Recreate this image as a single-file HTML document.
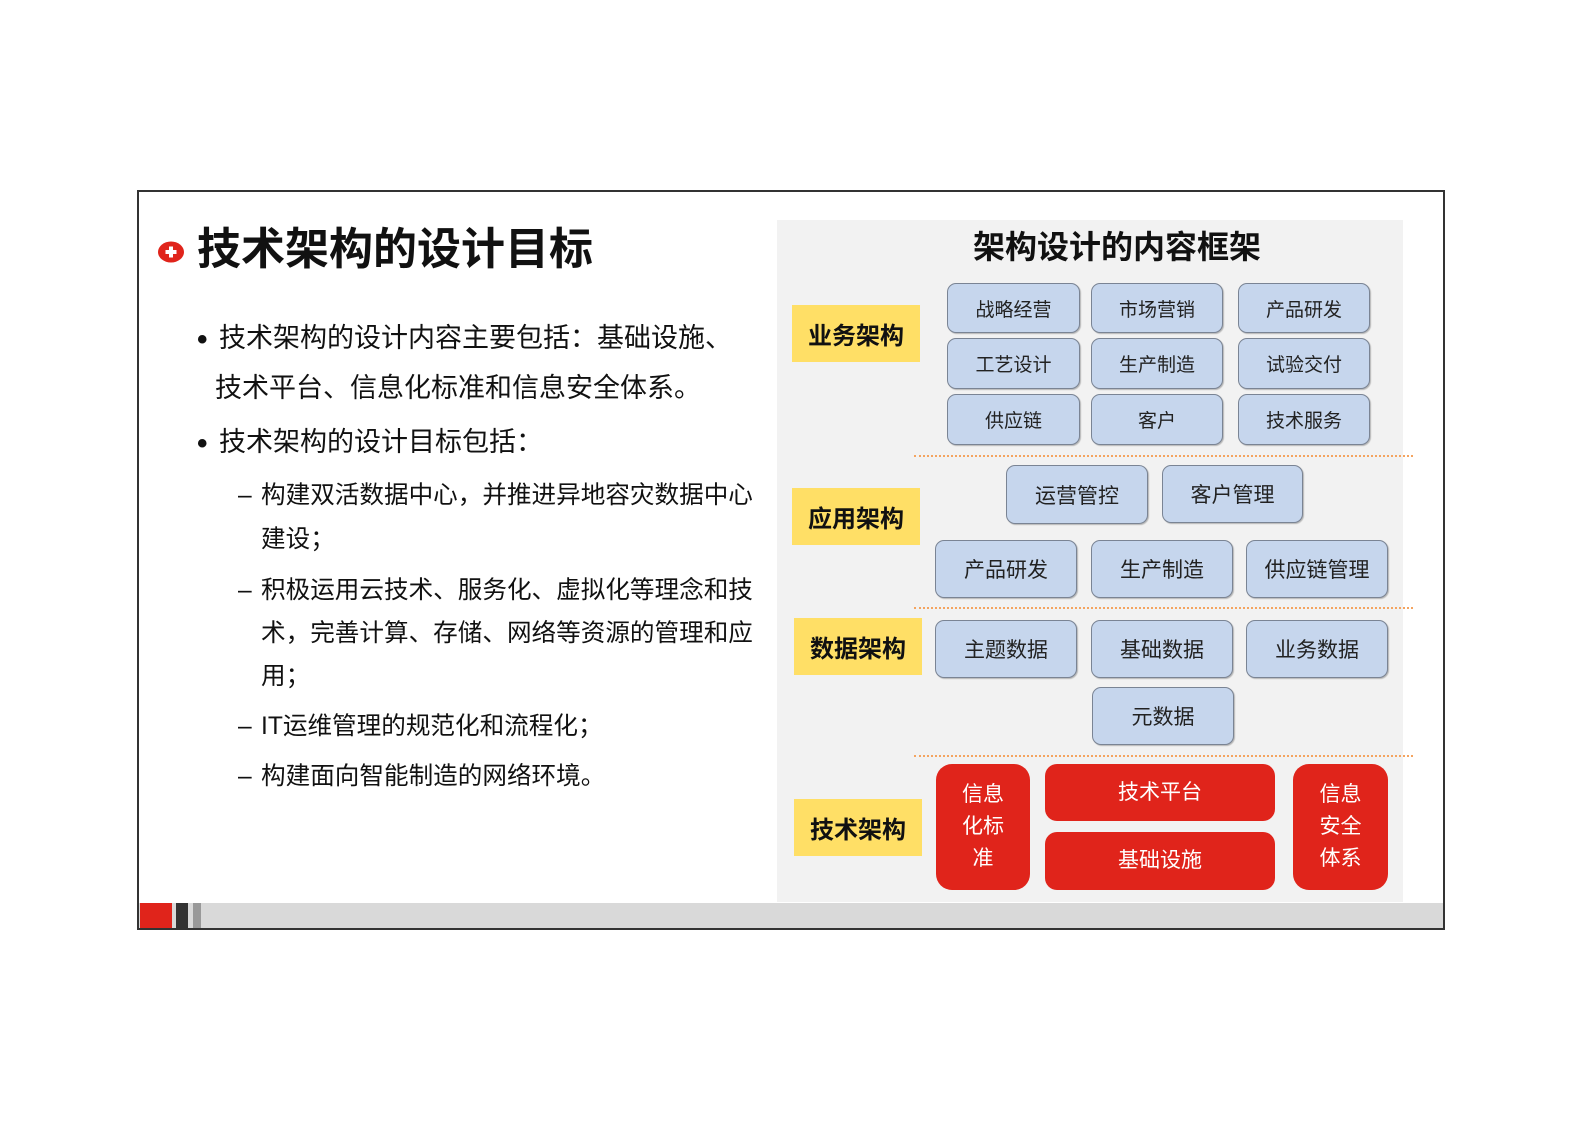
<!DOCTYPE html>
<html><head><meta charset="utf-8"><style>
*{margin:0;padding:0;box-sizing:border-box}
body{width:1587px;height:1122px;background:#fff;position:relative;overflow:hidden;font-family:"Liberation Sans","Noto Sans CJK SC",sans-serif;color:#111}
.a{position:absolute}
.frame{left:137px;top:190px;width:1308px;height:740px;border:2px solid #333;}
.t{position:absolute;white-space:nowrap;line-height:1}
.m{font-size:27px}
.s{font-size:24.6px}
.dot{font-size:30px;font-weight:bold}
.b{position:absolute;background:#c6d6ed;border:1.5px solid #7a8494;border-radius:9px;display:flex;align-items:center;justify-content:center;font-size:19px;color:#222;box-shadow:1px 1px 1px rgba(0,0,0,.25)}
.b2{font-size:21px}
.y{position:absolute;background:#ffdf66;display:flex;align-items:center;justify-content:center;font-size:24px;font-weight:bold;color:#111}
.r{position:absolute;background:#e0241b;border-radius:16px;display:flex;align-items:center;justify-content:center;color:#fff;font-size:21px;text-align:center;line-height:32px}
.d{position:absolute;left:914px;width:499px;height:0;border-top:2px dotted #f4a460}
</style></head><body>
<div class="a frame"></div>
<div class="a" style="left:777px;top:220px;width:626px;height:682px;background:#f2f2f2"></div>
<div class="a" style="left:139px;top:903px;width:1304px;height:25px;background:#d9d9d9"></div>
<div class="a" style="left:140px;top:903px;width:32px;height:25px;background:#e0241b"></div>
<div class="a" style="left:176px;top:903px;width:12px;height:25px;background:#333"></div>
<div class="a" style="left:193px;top:903px;width:8px;height:25px;background:#999"></div>

<svg class="a" style="left:157px;top:241px" width="28" height="22"><ellipse cx="14" cy="11" rx="13" ry="10.5" fill="#e0241b"/><rect x="8.5" y="9" width="11" height="4" fill="#fff"/><rect x="12" y="5.5" width="4" height="11" fill="#fff"/></svg>
<div class="t" style="left:197px;top:228px;font-size:44px;font-weight:bold">技术架构的设计目标</div>

<div class="t dot" style="left:197px;top:325px">•</div>
<div class="t m" style="left:219px;top:325px">技术架构的设计内容主要包括：基础设施、</div>
<div class="t m" style="left:215px;top:375px">技术平台、信息化标准和信息安全体系。</div>
<div class="t dot" style="left:197px;top:429px">•</div>
<div class="t m" style="left:219px;top:429px">技术架构的设计目标包括：</div>

<div class="t s" style="left:238px;top:484px">–</div>
<div class="t s" style="left:261px;top:484px">构建双活数据中心，并推进异地容灾数据中心</div>
<div class="t s" style="left:261px;top:528px">建设；</div>
<div class="t s" style="left:238px;top:579px">–</div>
<div class="t s" style="left:261px;top:579px">积极运用云技术、服务化、虚拟化等理念和技</div>
<div class="t s" style="left:261px;top:622px">术，完善计算、存储、网络等资源的管理和应</div>
<div class="t s" style="left:261px;top:665px">用；</div>
<div class="t s" style="left:238px;top:715px">–</div>
<div class="t s" style="left:261px;top:715px">IT运维管理的规范化和流程化；</div>
<div class="t s" style="left:238px;top:765px">–</div>
<div class="t s" style="left:261px;top:765px">构建面向智能制造的网络环境。</div>

<div class="t" style="left:777px;width:680px;text-align:center;top:231px;font-size:32px;font-weight:bold">架构设计的内容框架</div>

<div class="y" style="left:792px;top:305px;width:128px;height:57px">业务架构</div>
<div class="y" style="left:792px;top:488px;width:128px;height:57px">应用架构</div>
<div class="y" style="left:794px;top:618px;width:128px;height:57px">数据架构</div>
<div class="y" style="left:794px;top:799px;width:128px;height:57px">技术架构</div>

<div class="b" style="left:947px;top:283px;width:133px;height:50px">战略经营</div>
<div class="b" style="left:1091px;top:283px;width:132px;height:50px">市场营销</div>
<div class="b" style="left:1238px;top:283px;width:132px;height:50px">产品研发</div>
<div class="b" style="left:947px;top:338px;width:133px;height:51px">工艺设计</div>
<div class="b" style="left:1091px;top:338px;width:132px;height:51px">生产制造</div>
<div class="b" style="left:1238px;top:338px;width:132px;height:51px">试验交付</div>
<div class="b" style="left:947px;top:394px;width:133px;height:51px">供应链</div>
<div class="b" style="left:1091px;top:394px;width:132px;height:51px">客户</div>
<div class="b" style="left:1238px;top:394px;width:132px;height:51px">技术服务</div>
<div class="d" style="top:455px"></div>

<div class="b b2" style="left:1006px;top:465px;width:142px;height:59px">运营管控</div>
<div class="b b2" style="left:1162px;top:465px;width:141px;height:58px">客户管理</div>
<div class="b b2" style="left:935px;top:540px;width:142px;height:58px">产品研发</div>
<div class="b b2" style="left:1091px;top:540px;width:142px;height:58px">生产制造</div>
<div class="b b2" style="left:1246px;top:540px;width:142px;height:58px">供应链管理</div>
<div class="d" style="top:607px"></div>

<div class="b b2" style="left:935px;top:620px;width:142px;height:58px">主题数据</div>
<div class="b b2" style="left:1091px;top:620px;width:142px;height:58px">基础数据</div>
<div class="b b2" style="left:1246px;top:620px;width:142px;height:58px">业务数据</div>
<div class="b b2" style="left:1092px;top:687px;width:142px;height:58px">元数据</div>
<div class="d" style="top:755px"></div>

<div class="r" style="left:936px;top:764px;width:94px;height:126px">信息<br>化标<br>准</div>
<div class="r" style="left:1045px;top:764px;width:230px;height:57px;border-radius:12px">技术平台</div>
<div class="r" style="left:1045px;top:832px;width:230px;height:58px;border-radius:12px">基础设施</div>
<div class="r" style="left:1293px;top:764px;width:95px;height:126px">信息<br>安全<br>体系</div>
</body></html>
